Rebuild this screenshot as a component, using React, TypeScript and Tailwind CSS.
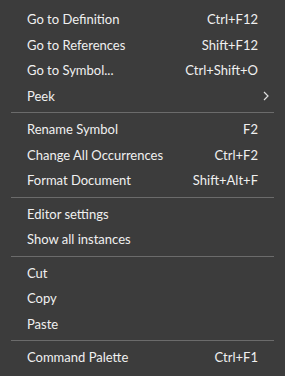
import React from "react";

type Item = { label: string; key?: string; sub?: boolean };

const groups: Item[][] = [
  [
    { label: "Go to Definition", key: "Ctrl+F12" },
    { label: "Go to References", key: "Shift+F12" },
    { label: "Go to Symbol...", key: "Ctrl+Shift+O" },
    { label: "Peek", sub: true },
  ],
  [
    { label: "Rename Symbol", key: "F2" },
    { label: "Change All Occurrences", key: "Ctrl+F2" },
    { label: "Format Document", key: "Shift+Alt+F" },
  ],
  [{ label: "Editor settings" }, { label: "Show all instances" }],
  [{ label: "Cut" }, { label: "Copy" }, { label: "Paste" }],
  [{ label: "Command Palette", key: "Ctrl+F1" }],
];

function Row({ item }: { item: Item }) {
  return (
    <div className="flex h-[25.5px] items-center pl-[27px] pr-[27px] pt-[1px]">
      <span className="flex-1">{item.label}</span>
      {item.key && <span>{item.key}</span>}
      {item.sub && (
        <svg
          width="8"
          height="10"
          viewBox="0 0 8 10"
          className="mr-[-12px]"
          fill="none"
          stroke="#e0e0e0"
          strokeWidth="1.2"
        >
          <path d="M2 1 L6 5 L2 9" />
        </svg>
      )}
    </div>
  );
}

export default function App() {
  return (
    <div
      className="w-[285px] h-[376px] bg-[#3c3c3c] text-[#f0f0f0] text-[13px] pt-[6.5px] pb-[6px]"
      style={{ fontFamily: 'Lato, sans-serif' }}
    >
      {groups.map((g, gi) => (
        <React.Fragment key={gi}>
          {gi > 0 && (
            <div className="h-[8px] flex items-center px-[11px]">
              <div className="h-px w-full bg-[#6b6b6b]" />
            </div>
          )}
          {g.map((it) => (
            <Row key={it.label} item={it} />
          ))}
        </React.Fragment>
      ))}
    </div>
  );
}
